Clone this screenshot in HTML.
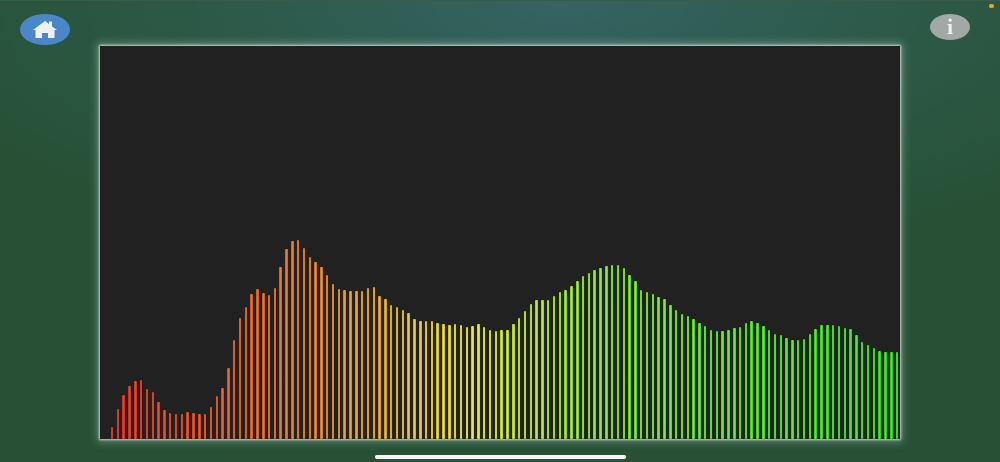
<!DOCTYPE html>
<html><head><meta charset="utf-8"><style>
html,body{margin:0;padding:0}
body{width:1000px;height:462px;overflow:hidden;position:relative;font-family:"Liberation Sans",sans-serif;
background:radial-gradient(ellipse 700px 260px at 560px 0px,#356464 0%,#2d5a4a 45%,#275035 100%);}
#topline{position:absolute;left:0;top:0;width:1000px;height:1px;background:#3a5a4a}
#panel{position:absolute;left:100px;top:46px;width:800px;height:393px;background:#212121;
box-shadow:0 0 2px 1px rgba(230,240,235,.75),0 0 8px 3px rgba(200,225,215,.35);}
#home{position:absolute;left:20px;top:14px;width:50px;height:31px;border-radius:50%;background:#4a86c8}
#info{position:absolute;left:930px;top:14px;width:40px;height:26px;border-radius:50%;background:#a2a8a6}
#info span{position:absolute;left:0;top:1px;width:40px;text-align:center;font:bold 22px "Liberation Serif",serif;color:#eef0ee;line-height:24px}
#dot{position:absolute;left:989px;top:4px;width:5px;height:4px;border-radius:2px;background:#f0a020}
#bar{position:absolute;left:375px;top:455px;width:251px;height:4px;border-radius:2px;background:#f4f4f4}
.b{position:absolute;width:2.6px;bottom:23px;border-radius:1px}
</style></head><body>
<div id="topline"></div>
<div id="home"><svg width="50" height="31" viewBox="0 0 50 31"><path d="M13 16 L25 7 L29 10 L29 7.5 L32 7.5 L32 12.5 L37 16 L34.5 16 L34.5 24 L28 24 L28 19 L22 19 L22 24 L15.5 24 L15.5 16 Z" fill="#eef2f6"/></svg></div>
<div id="info"><span>i</span></div>
<div id="dot"></div>
<div id="panel"></div>
<div id="bars"></div>
<div id="bar"></div>
<script>
var t=[427,409,395,386,381,380,389,392,402,410,413,414,414,412,413,414,414,407,396,388,368,340,318,307,294,289,293,295,288,267,249,241,240,248,257,262,267,275,284,289,290,291,291,291,288,287,296,299,305,307,310,313,319,321,321,321,323,324,325,324,325,327,326,324,327,330,331,330,330,324,318,311,304,300,300,300,296,292,290,286,281,276,273,270,268,266,265,265,268,275,281,290,292,294,297,299,305,310,314,316,319,323,326,330,331,331,330,328,327,323,321,323,326,330,334,335,338,340,340,339,334,329,325,325,325,326,328,329,335,342,345,348,351,352,352,352];
var n=t.length,h='',sp=(896.5-111.5)/(n-1);
function hue(x){var p=[[112,4],[300,26],[450,56],[600,92],[900,118]];for(var i=0;i<p.length-1;i++){if(x<=p[i+1][0]){var f=(x-p[i][0])/(p[i+1][0]-p[i][0]);return p[i][1]+f*(p[i+1][1]-p[i][1]);}}return 118;}
for(var i=0;i<n;i++){var x=110.8+i*sp,hu=hue(x);var c='hsl('+hu+',82%,40%)',c2='hsl('+hu+',85%,56%)';
h+='<div class="b" style="left:'+x.toFixed(1)+'px;height:'+(439-t[i])+'px;background:linear-gradient(90deg,'+c+','+c2+' 35%,'+c2+' 65%,'+c+')"></div>';}
document.getElementById('bars').innerHTML=h;
</script>
</body></html>
